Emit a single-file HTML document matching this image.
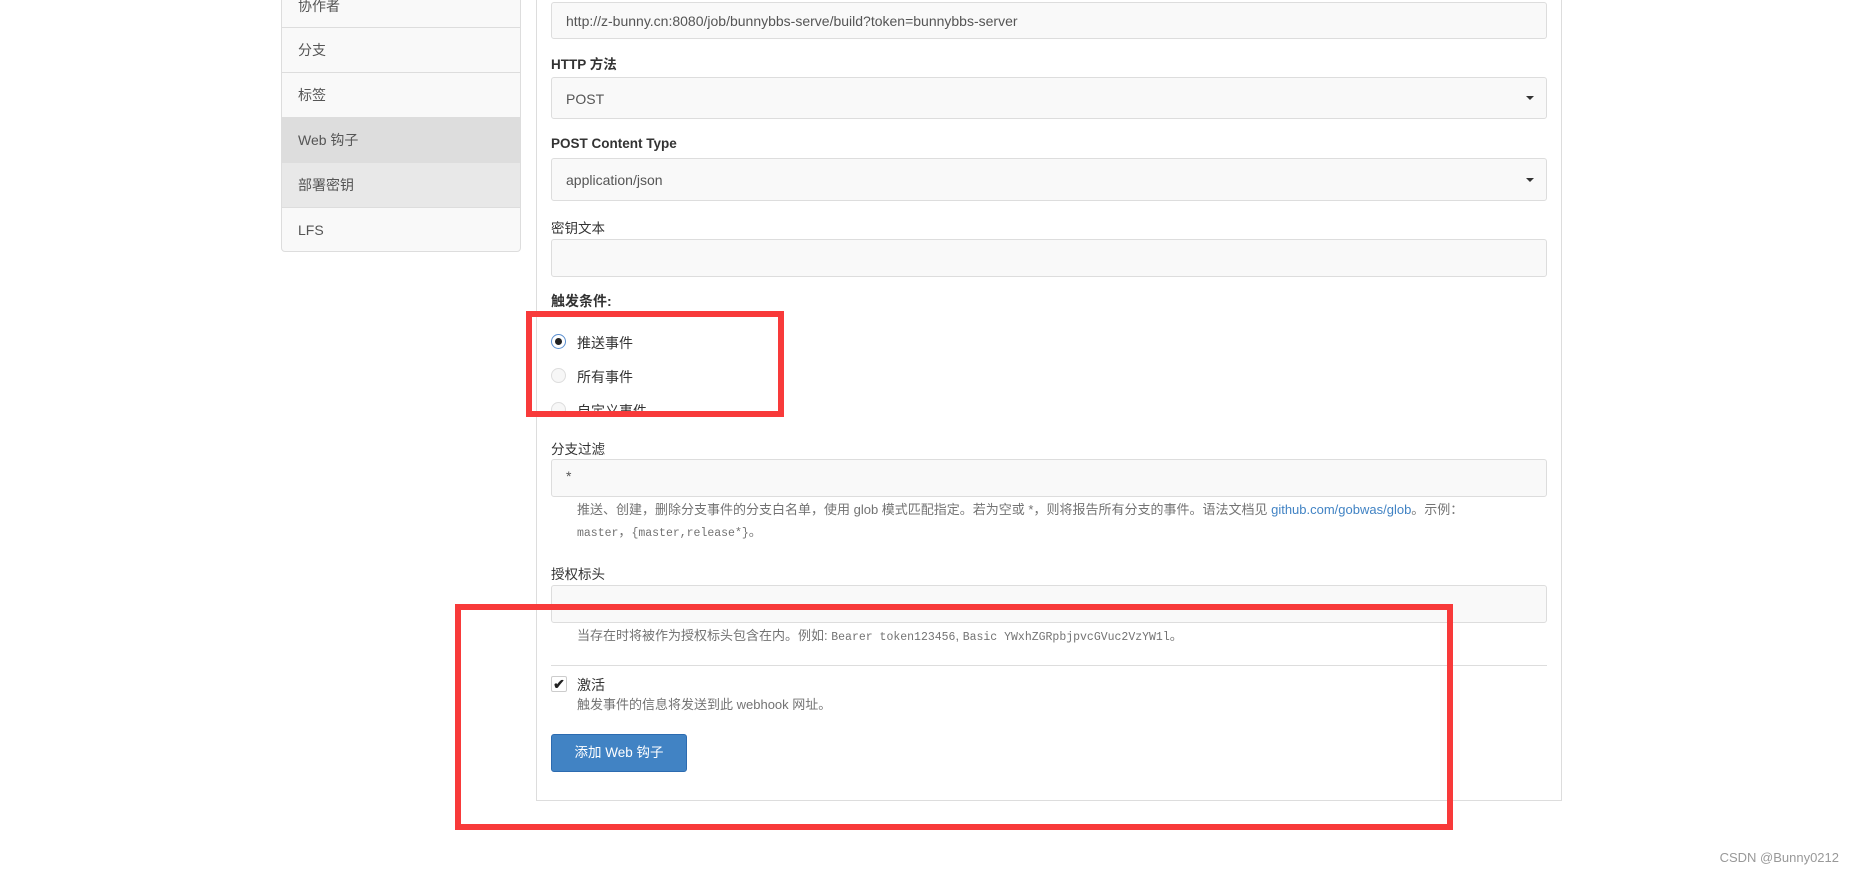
<!DOCTYPE html>
<html><head><meta charset="utf-8"><style>
*{box-sizing:border-box;margin:0;padding:0}
body{width:1853px;height:876px;background:#fff;position:relative;overflow:hidden;font-family:"Liberation Sans","Noto Sans CJK SC",sans-serif;font-size:14px;color:#333}
.a{position:absolute}
.side{left:281px;top:-10px;width:240px;height:262px;border:1px solid #ddd;border-radius:0 0 4px 4px;background:#f9f9f9;overflow:hidden}
.side div{position:absolute;left:0;width:100%;height:45px;border-bottom:1px solid #ddd;padding-left:16px;line-height:45px;color:#555}
.panel{left:536px;top:-5px;width:1026px;height:806px;border:1px solid #ddd;border-top:none}
.inp{left:551px;width:996px;background:#f9f9f9;border:1px solid #ddd;border-radius:3px;padding-left:14px;color:#555}
.lbl{left:551px;font-weight:bold;color:#333;font-size:13.5px}
.caret{position:absolute;right:12px;top:50%;margin-top:-2px;border-left:4px solid transparent;border-right:4px solid transparent;border-top:4px solid #333}
.radio{left:551px;width:15px;height:15px;border-radius:50%;border:1px solid #ddd;background:#f7f7f7}
.help{left:577px;color:#737373;font-size:13px}
.mono{font-family:"Liberation Mono",monospace;font-size:11.5px}
.red{border:6px solid #f83a3a}
</style></head><body>
<div class="a side">
<div style="top:0;height:37px;line-height:30px">协作者</div>
<div style="top:37px">分支</div>
<div style="top:82px">标签</div>
<div style="top:127px;background:#ddd">Web 钩子</div>
<div style="top:172px;background:#e8e8e8">部署密钥</div>
<div style="top:217px;border-bottom:none">LFS</div>
</div>
<div class="a panel"></div>
<div class="a inp" style="top:2px;height:37px;line-height:37px">http://z-bunny.cn:8080/job/bunnybbs-serve/build?token=bunnybbs-server</div>
<div class="a lbl" style="top:53px">HTTP 方法</div>
<div class="a inp" style="top:77px;height:42px;line-height:42px">POST<span class="caret"></span></div>
<div class="a lbl" style="top:136px">POST Content Type</div>
<div class="a inp" style="top:158px;height:43px;line-height:43px">application/json<span class="caret"></span></div>
<div class="a lbl" style="top:217px;font-weight:normal">密钥文本</div>
<div class="a inp" style="top:239px;height:38px"></div>
<div class="a lbl" style="top:291px;font-size:14px">触发条件:</div>
<div class="a radio" style="top:334px;border-color:#5b8fd0;background:#fff"><span class="a" style="left:3px;top:3px;width:7px;height:7px;border-radius:50%;background:#222"></span></div>
<div class="a" style="left:577px;top:333px">推送事件</div>
<div class="a radio" style="top:368px"></div>
<div class="a" style="left:577px;top:367px">所有事件</div>
<div class="a" style="left:545px;top:400px;width:200px;height:12px;overflow:hidden">
<div class="a radio" style="left:6px;top:2px"></div>
<div class="a" style="left:32px;top:1px">自定义事件</div>
</div>
<div class="a lbl" style="top:438px;font-weight:normal">分支过滤</div>
<div class="a inp" style="top:459px;height:38px;line-height:32px">*</div>
<div class="a help" style="top:499px;line-height:22px">推送、创建，删除分支事件的分支白名单，使用 glob 模式匹配指定。若为空或 *，则将报告所有分支的事件。语法文档见 <span style="color:#4183c4">github.com/gobwas/glob</span>。示例：<br><span class="mono">master</span>，<span class="mono">{master,release*}</span>。</div>
<div class="a lbl" style="top:563px;font-weight:normal">授权标头</div>
<div class="a inp" style="top:585px;height:38px"></div>
<div class="a help" style="top:625px">当存在时将被作为授权标头包含在内。例如: <span class="mono">Bearer token123456</span>, <span class="mono">Basic YWxhZGRpbjpvcGVuc2VzYW1l</span>。</div>
<div class="a" style="left:551px;top:665px;width:996px;height:1px;background:#ddd"></div>
<div class="a" style="left:551px;top:676px;width:16px;height:16px;border:1px solid #ccc;border-radius:2px;background:#fff;font-size:14px;line-height:14px;text-align:center;font-weight:bold;color:#222">✔</div>
<div class="a" style="left:577px;top:675px">激活</div>
<div class="a help" style="top:694px">触发事件的信息将发送到此 webhook 网址。</div>
<div class="a" style="left:551px;top:734px;width:136px;height:38px;background:#4183c4;border:1px solid #2c6bb0;border-radius:3px;color:#fff;text-align:center;line-height:36px;font-size:13.5px">添加 Web 钩子</div>
<div class="a red" style="left:526px;top:311px;width:258px;height:106px"></div>
<div class="a red" style="left:455px;top:604px;width:998px;height:226px"></div>
<div class="a" style="right:14px;top:850px;color:#999;font-size:13px">CSDN @Bunny0212</div>
</body></html>
